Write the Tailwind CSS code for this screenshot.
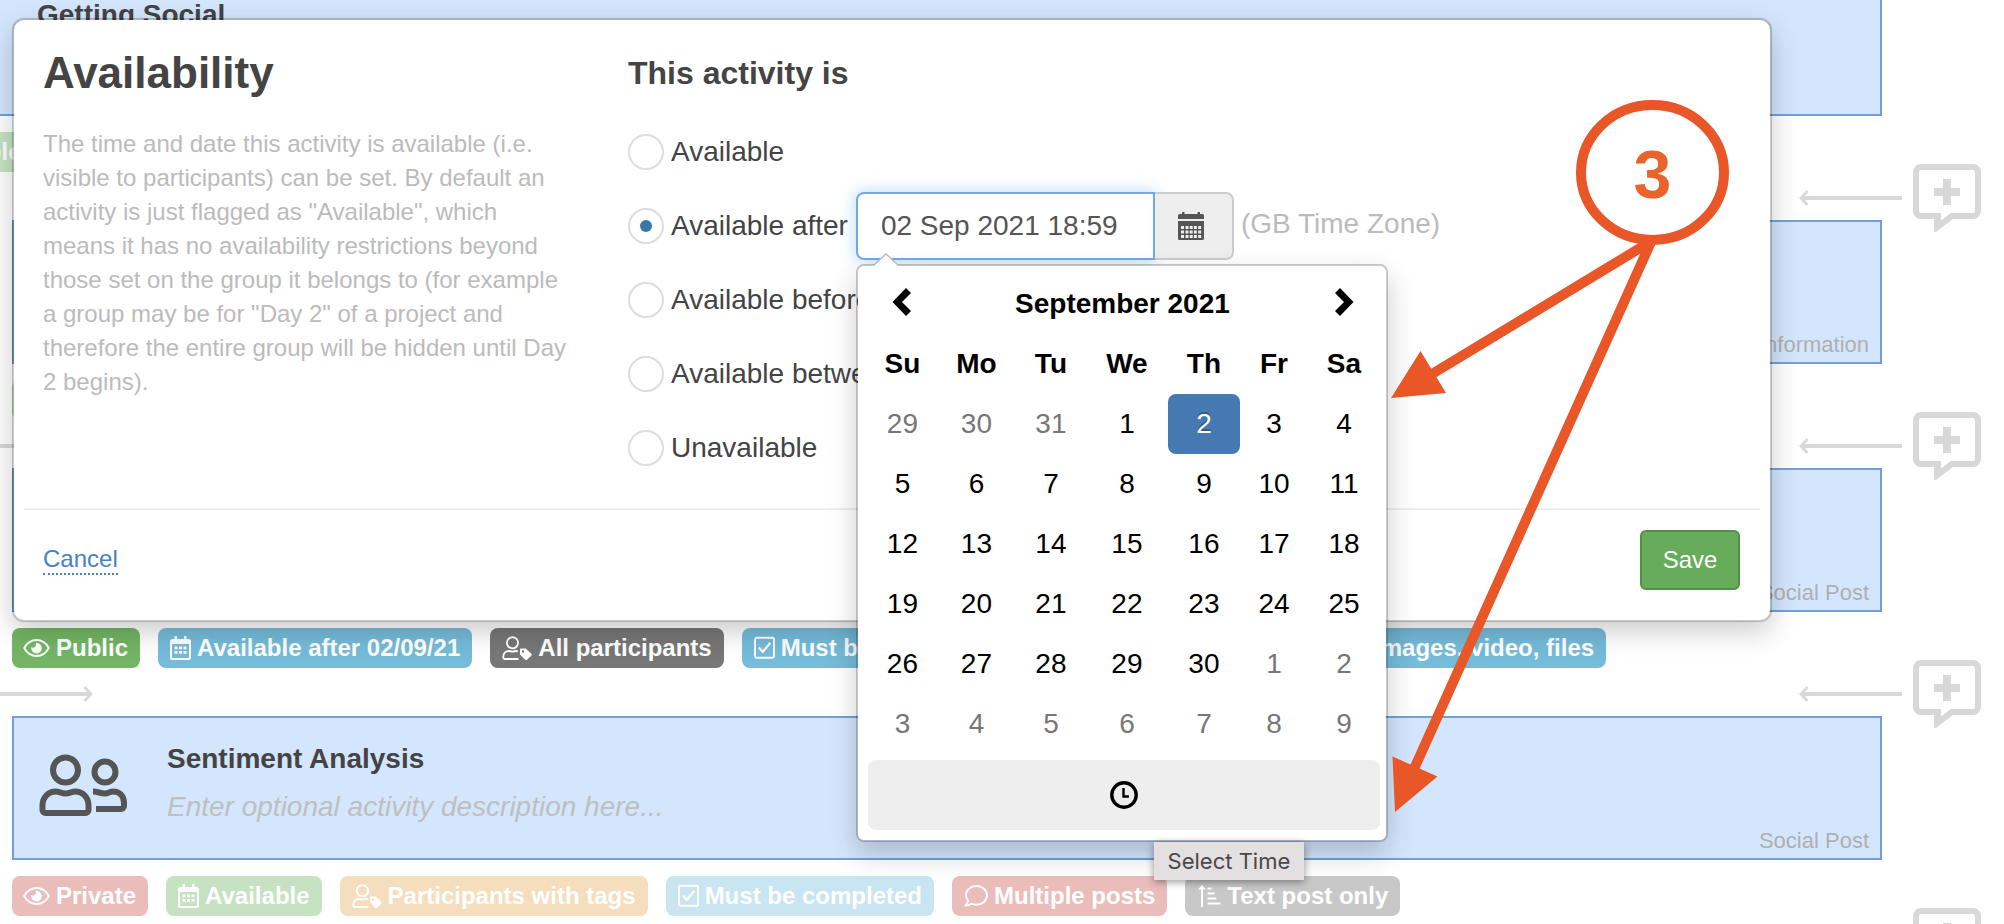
<!DOCTYPE html>
<html lang="en">
<head>
    <meta charset="UTF-8">
    <meta name="viewport" content="width=device-width, initial-scale=1.0">
    <title>Activity availability</title>

    <!-- Tailwind CSS for styling -->
    <script src="https://cdn.jsdelivr.net/npm/@tailwindcss/browser@4"></script>
</head>
<body class="relative h-screen overflow-hidden bg-white font-['Liberation_Sans',Arial,sans-serif] text-[#444]">

    <!-- Shared icons -->
    <svg class="hidden" aria-hidden="true">
        <symbol id="i-eye" viewBox="0 0 27 24">
            <path d="M1.200 12C4 6.800 8.500 4 13.500 4s9.500 2.800 12.300 8c-2.800 5.200-7.300 8-12.300 8S4 17.200 1.200 12z" fill="none" stroke="currentColor" stroke-width="1.900"/>
            <path d="M13.500 6.800a5.300 5.300 0 1 1-5.200 4.300 3 3 0 0 0 4.600-3.200 3 3 0 0 0-.3-1z" fill="currentColor"/>
        </symbol>
        <symbol id="i-calendar" viewBox="0 0 21 24">
            <path fill="currentColor" fill-rule="evenodd" d="M4.500 0h2.500v3h7V0h2.500v3h2A2.500 2.500 0 0 1 21 5.500v16A2.500 2.500 0 0 1 18.500 24h-16A2.500 2.500 0 0 1 0 21.500v-16A2.500 2.500 0 0 1 2.500 3h2zM2 8v13.500c0 .3.200.5.500.5h16c.300 0 .5-.2.5-.5V8z"/>
            <path fill="currentColor" d="M4.500 10.500h3v2.800h-3zM9 10.500h3v2.800H9zM13.500 10.500h3v2.800h-3zM4.500 15h3v2.800h-3zM9 15h3v2.800H9zM13.500 15h3v2.800h-3z"/>
        </symbol>
        <symbol id="i-user-tag" viewBox="0 0 30 24">
            <g fill="none" stroke="currentColor" stroke-width="1.900">
                <circle cx="10.500" cy="6.800" r="5.600"/>
                <path d="M16.500 23H3a1.800 1.800 0 0 1-1.800-1.800c0-3.800 2.500-6.200 5.800-6.200 1.200 0 2 .6 3.500.6s2.300-.6 3.500-.6c.8 0 1.400.1 1.900.3"/>
            </g>
            <path fill="currentColor" fill-rule="evenodd" d="M18.800 12.500h5l5.500 5.300c.6.600.6 1.300 0 1.900l-4.400 4c-.600.5-1.200.5-1.800 0l-5.100-5.100v-5.300c0-.5.3-.8.800-.8zm2.200 1.700a1.200 1.200 0 1 0 0 2.400 1.200 1.200 0 0 0 0-2.400z"/>
        </symbol>
        <symbol id="i-check" viewBox="0 0 21 24">
            <rect x="1" y="1.800" width="19" height="20" rx="1.800" fill="none" stroke="currentColor" stroke-width="1.900"/>
            <path d="M4.800 11.500l4 4.300 7.500-9" fill="none" stroke="currentColor" stroke-width="2.200"/>
        </symbol>
        <symbol id="i-comment" viewBox="0 0 24 24">
            <path d="M12.500 2C6.600 2 2 6 2 11c0 2.200.8 4.200 2.200 5.800-.5 2-1.600 3.500-3 4.700 2.200.2 4.200-.4 5.800-1.800 1.700.7 3.500 1 5.500 1C18.300 20.700 23 16.500 23 11.300S18.300 2 12.500 2z" fill="none" stroke="currentColor" stroke-width="1.900" stroke-linejoin="round"/>
        </symbol>
        <symbol id="i-sort" viewBox="0 0 24 24">
            <path d="M5 23V3" fill="none" stroke="currentColor" stroke-width="1.900"/>
            <path d="M1.200 5.500L5 .5l3.800 5z" fill="currentColor"/>
            <path d="M10.500 4.500h4M10.500 9.500h7M10.500 14.500h9M10.500 19.500h13" fill="none" stroke="currentColor" stroke-width="2"/>
        </symbol>
        <symbol id="i-users" viewBox="0 0 88 64">
            <g fill="none" stroke="currentColor" stroke-width="6">
                <circle cx="26.500" cy="16" r="12.500"/>
                <circle cx="66" cy="18" r="10.500"/>
                <path d="M17 37.500c3 0 5.500 2 9.500 2s6.500-2 9.500-2c8 0 13.500 6 13.500 14V56a3 3 0 0 1-3 3h-40a3 3 0 0 1-3-3v-4.500c0-8 5.500-14 13.500-14z"/>
                <path d="M54 37.500c5 0 7 2 12 2 3 0 5-2 8-2 7 0 11 5 11 11.500V52a3 3 0 0 1-3 3H57"/>
            </g>
        </symbol>
        <symbol id="i-arrow" viewBox="0 0 103 16">
            <path d="M103 8H3" fill="none" stroke="currentColor" stroke-width="4"/>
            <path d="M8.500 1L2 8l6.500 7" fill="none" stroke="currentColor" stroke-width="2.800"/>
        </symbol>
        <symbol id="i-add-post" viewBox="0 0 68 68">
            <path fill="currentColor" fill-rule="evenodd" d="M8 0h52a8 8 0 0 1 8 8v39a8 8 0 0 1-8 8H40L23 68a1.500 1.500 0 0 1-2-1.500V55H8a8 8 0 0 1-8-8V8a8 8 0 0 1 8-8zM8.500 6A2.500 2.500 0 0 0 6 8.500v38A2.500 2.500 0 0 0 8.500 49H28v7.500L38 49h21.500a2.500 2.500 0 0 0 2.500-2.500v-38A2.500 2.500 0 0 0 59.500 6z"/>
            <path fill="currentColor" d="M30 15h8v9h9v8h-9v9h-8v-9h-9v-8h9z"/>
        </symbol>
    </svg>

    <!-- Activity list -->
    <main class="-mt-7">

        <!-- Activity 1 -->
        <section class="-ml-[122px] mr-[122px]">
            <article class="flex h-36 border-2 border-[#739fd8] bg-[#d4e6fd] pt-[23px] pl-[157px]">
                <h3 class="text-[28px]/[36px] font-bold">Getting Social</h3>
            </article>
            <div class="mt-4 flex gap-4 text-2xl/10 font-bold text-white">
                <span class="flex items-center gap-1.5 rounded-lg bg-[#c6e2c3] px-3"><svg class="h-6 w-[21px]"><use href="#i-calendar"/></svg>Available</span>
            </div>
        </section>

        <div class="flex h-12 items-center justify-end gap-[11px] pt-1 pr-[23px] text-[#d8d8d8]">
            <svg class="h-4 w-[103px]"><use href="#i-arrow"/></svg>
            <button type="button" aria-label="Add activity"><svg class="size-[68px]"><use href="#i-add-post"/></svg></button>
        </div>

        <!-- Activity 2 -->
        <section class="ml-3 mr-[122px]">
            <article class="flex h-36 items-end justify-end border-2 border-[#739fd8] bg-[#d4e6fd] px-[11px] py-1">
                <span class="text-[22px]/[26px] text-[#b0b0b0]">Information</span>
            </article>
            <div class="mt-4 flex gap-4 text-2xl/10 font-bold text-white">
                <span class="flex items-center gap-1.5 rounded-lg bg-[#c6e2c3] px-3"><svg class="h-6 w-[27px]"><use href="#i-eye"/></svg>Public</span>
            </div>
        </section>

        <div class="flex h-12 items-center gap-[11px] pt-1 pr-[23px] text-[#d8d8d8]">
            <svg class="-ml-2.5 h-4 w-[103px] rotate-180"><use href="#i-arrow"/></svg>
            <svg class="ml-auto h-4 w-[103px]"><use href="#i-arrow"/></svg>
            <button type="button" aria-label="Add activity"><svg class="size-[68px]"><use href="#i-add-post"/></svg></button>
        </div>

        <!-- Activity 3 -->
        <section class="ml-3 mr-[122px]">
            <article class="flex h-36 items-end justify-end border-2 border-[#739fd8] bg-[#d4e6fd] px-[11px] py-1">
                <span class="text-[22px]/[26px] text-[#b0b0b0]">Social Post</span>
            </article>
            <div class="mt-4 flex gap-[18px] text-2xl/10 font-bold whitespace-nowrap text-white">
                <span class="flex items-center gap-1.5 rounded-lg bg-[#73b564] pr-3 pl-[11px]"><svg class="h-6 w-[27px]"><use href="#i-eye"/></svg>Public</span>
                <span class="flex items-center gap-1.5 rounded-lg bg-[#75bcda] px-3"><svg class="h-6 w-[21px]"><use href="#i-calendar"/></svg>Available after 02/09/21</span>
                <span class="flex items-center gap-1.5 rounded-lg bg-[#777] px-3"><svg class="h-6 w-[30px]"><use href="#i-user-tag"/></svg>All participants</span>
                <span class="flex items-center gap-1.5 rounded-lg bg-[#75bcda] px-3"><svg class="h-6 w-[21px]"><use href="#i-check"/></svg>Must be completed</span>
                <span class="flex items-center gap-1.5 rounded-lg bg-[#75bcda] px-3"><svg class="size-6"><use href="#i-comment"/></svg>Multiple posts</span>
                <span class="flex items-center gap-1.5 rounded-lg bg-[#75bcda] px-3"><svg class="size-6"><use href="#i-sort"/></svg>Allow images, video, files</span>
            </div>
        </section>

        <div class="flex h-12 items-center gap-[11px] pt-1 pr-[23px] text-[#d8d8d8]">
            <svg class="-ml-2.5 h-4 w-[103px] rotate-180"><use href="#i-arrow"/></svg>
            <svg class="ml-auto h-4 w-[103px]"><use href="#i-arrow"/></svg>
            <button type="button" aria-label="Add activity"><svg class="size-[68px]"><use href="#i-add-post"/></svg></button>
        </div>

        <!-- Activity 4 -->
        <section class="ml-3 mr-[122px]">
            <article class="flex h-36 border-2 border-[#739fd8] bg-[#d4e6fd] pr-[11px] pl-[25px]">
                <svg class="mt-9 h-16 w-[88px] text-[#555]"><use href="#i-users"/></svg>
                <div class="ml-10 flex-1 pt-[23px]">
                    <h3 class="text-[28px]/[36px] font-bold">Sentiment Analysis</h3>
                    <p class="mt-3 text-[28px]/[36px] text-[#bfbfbf] italic">Enter optional activity description here...</p>
                </div>
                <span class="self-end pb-1 text-[22px]/[26px] text-[#b0b0b0]">Social Post</span>
            </article>
            <div class="mt-4 flex gap-[18px] text-2xl/10 font-bold whitespace-nowrap text-white">
                <span class="flex items-center gap-1.5 rounded-lg bg-[#eabdbb] pr-3 pl-[11px]"><svg class="h-6 w-[27px]"><use href="#i-eye"/></svg>Private</span>
                <span class="flex items-center gap-1.5 rounded-lg bg-[#c6e2c3] px-3"><svg class="h-6 w-[21px]"><use href="#i-calendar"/></svg>Available</span>
                <span class="flex items-center gap-1.5 rounded-lg bg-[#f5debd] px-3"><svg class="h-6 w-[30px]"><use href="#i-user-tag"/></svg>Participants with tags</span>
                <span class="flex items-center gap-1.5 rounded-lg bg-[#c9e5f1] px-3"><svg class="h-6 w-[21px]"><use href="#i-check"/></svg>Must be completed</span>
                <span class="flex items-center gap-1.5 rounded-lg bg-[#eabdbb] px-3"><svg class="size-6"><use href="#i-comment"/></svg>Multiple posts</span>
                <span class="flex items-center gap-1.5 rounded-lg bg-[#c8c8c8] px-3"><svg class="size-6"><use href="#i-sort"/></svg>Text post only</span>
            </div>
        </section>

        <div class="flex h-12 items-center justify-end pt-1 pr-[23px] text-[#d8d8d8]">
            <button type="button" aria-label="Add activity"><svg class="size-[68px]"><use href="#i-add-post"/></svg></button>
        </div>
    </main>

    <!-- Availability popover -->
    <form role="dialog" aria-labelledby="dialog-title" class="absolute top-[18px] right-[232px] left-3 rounded-xl border-2 border-black/20 bg-white bg-clip-padding shadow-[0_10px_28px_rgba(0,0,0,0.2)]">
        <div class="flex px-[29px] pt-[29px] pb-[23px]">
            <div class="w-[585px] pr-14">
                <h1 id="dialog-title" class="text-[44px]/[48px] font-bold">Availability</h1>
                <p class="mt-[30px] text-2xl/[34px] text-[#bbb]">The time and date this activity is available (i.e. visible to participants) can be set. By default an activity is just flagged as "Available", which means it has no availability restrictions beyond those set on the group it belongs to (for example a group may be for "Day 2" of a project and therefore the entire group will be hidden until Day 2 begins).</p>
            </div>

            <div class="flex-1 text-[28px]">
                <h2 class="mb-[18px] text-[32px]/[48px] font-bold">This activity is</h2>
                <div class="flex h-[74px] items-center gap-[7px]">
                    <input type="radio" name="availability" id="opt-available" class="size-9 appearance-none rounded-full border-2 border-[#ddd] bg-clip-content p-2.5 checked:bg-[#3a76a8]">
                    <label for="opt-available">Available</label>
                </div>
                <div class="flex h-[74px] items-center gap-[7px]">
                    <input type="radio" name="availability" id="opt-after" checked class="size-9 appearance-none rounded-full border-2 border-[#ddd] bg-clip-content p-2.5 checked:bg-[#3a76a8]">
                    <label for="opt-after" class="pr-px">Available after</label>
                    <div class="relative flex h-[68px]">
                        <input type="text" aria-label="Available after date" value="02 Sep 2021 18:59" class="w-[299px] rounded-l-lg border-2 border-[#70a9e6] px-[23px] text-[#555] shadow-[0_0_16px_rgba(102,175,233,0.5)] outline-none">
                        <button type="button" aria-label="Open calendar" class="flex w-[79px] items-center justify-center rounded-r-lg border-2 border-l-0 border-[#ccc] bg-[#eee] pr-1 text-[#555]">
                            <svg class="h-7 w-[26px]" viewBox="0 0 26 28" fill="currentColor">
                                <path d="M4 0h2.500v2h13V0H22v2h2.500A1.500 1.500 0 0 1 26 3.500V7H0V3.500A1.500 1.500 0 0 1 1.500 2H4z"/>
                                <path fill-rule="evenodd" d="M0 9h26v17.500a1.500 1.500 0 0 1-1.500 1.500h-23A1.500 1.500 0 0 1 0 26.500zM3 14v3h3v-3zm4.500 0v3h3v-3zm4.200 0v3h3v-3zm4.200 0v3h3v-3zm4.300 0v3h3v-3zM3 18.500v3h3v-3zm4.500 0v3h3v-3zm4.200 0v3h3v-3zm4.200 0v3h3v-3zm4.300 0v3h3v-3zM3 23v3h3v-3zm4.500 0v3h3v-3zm4.200 0v3h3v-3zm4.200 0v3h3v-3zm4.300 0v3h3v-3z"/>
                            </svg>
                        </button>

                        <!-- Date picker -->
                        <div class="absolute top-[72px] left-0 z-10 w-[532px] rounded-lg border-2 border-black/20 bg-white bg-clip-padding pt-2 pr-1.5 pb-2.5 pl-2.5 text-black shadow-[0_12px_28px_rgba(0,0,0,0.2)]">
                            <svg class="absolute -top-[13px] left-[15px] h-[13px] w-[26px]" viewBox="0 0 26 13">
                                <path d="M0 13L13 1l13 12z" fill="#fff"/>
                                <path d="M0 13L13 1l13 12" fill="none" stroke="#bbb" stroke-width="1.500"/>
                            </svg>
                            <table class="w-full table-fixed text-center [&_td]:h-[60px] [&_th]:h-[60px] [&_td]:p-0 [&_th]:p-0">
                                <colgroup>
                                    <col class="w-[69px]"><col class="w-[79px]"><col class="w-[70px]"><col class="w-[82px]"><col class="w-[72px]"><col class="w-[68px]"><col>
                                </colgroup>
                                <thead>
                                    <tr>
                                        <th><button type="button" aria-label="Previous month" class="block w-full pb-1"><svg class="mx-auto h-7 w-5" viewBox="0 0 20 28"><path d="M14 0l5 5-9 9 9 9-5 5L.5 14z"/></svg></button></th>
                                        <th colspan="5">September 2021</th>
                                        <th><button type="button" aria-label="Next month" class="block w-full pb-1"><svg class="mx-auto h-7 w-5" viewBox="0 0 20 28"><path d="M6 0L1 5l9 9-9 9 5 5 13.500-14z"/></svg></button></th>
                                    </tr>
                                    <tr><th>Su</th><th>Mo</th><th>Tu</th><th>We</th><th>Th</th><th>Fr</th><th>Sa</th></tr>
                                </thead>
                                <tbody>
                                    <tr><td class="text-[#777]">29</td><td class="text-[#777]">30</td><td class="text-[#777]">31</td><td>1</td><td class="rounded-lg bg-[#4679b2] text-white text-shadow-[0_-2px_0_rgba(0,0,0,0.25)]">2</td><td>3</td><td>4</td></tr>
                                    <tr><td>5</td><td>6</td><td>7</td><td>8</td><td>9</td><td>10</td><td>11</td></tr>
                                    <tr><td>12</td><td>13</td><td>14</td><td>15</td><td>16</td><td>17</td><td>18</td></tr>
                                    <tr><td>19</td><td>20</td><td>21</td><td>22</td><td>23</td><td>24</td><td>25</td></tr>
                                    <tr><td>26</td><td>27</td><td>28</td><td>29</td><td>30</td><td class="text-[#777]">1</td><td class="text-[#777]">2</td></tr>
                                    <tr class="text-[#777]"><td>3</td><td>4</td><td>5</td><td>6</td><td>7</td><td>8</td><td>9</td></tr>
                                </tbody>
                            </table>
                            <button type="button" aria-label="Select Time" class="mt-1.5 flex h-[70px] w-full items-center justify-center rounded-lg bg-[#eee]">
                                <svg class="size-7" viewBox="0 0 28 28" fill="none" stroke="#000">
                                    <circle cx="14" cy="14" r="12.200" stroke-width="3.400"/>
                                    <path d="M13.500 7v8.500H19" stroke-width="2.400"/>
                                </svg>
                            </button>
                            <!-- Tooltip of the time button -->
                            <div role="tooltip" class="absolute top-full left-[296px] mt-0.5 flex h-[38px] w-[150px] items-center justify-center bg-[#e4dfe0] font-['Inter',sans-serif] text-[22px] text-[#4a4748] shadow-[0_2px_8px_rgba(0,0,0,0.4)]">Select Time</div>
                        </div>
                    </div>
                    <span class="pb-1 text-[#bbb]">(GB Time Zone)</span>
                </div>
                <div class="flex h-[74px] items-center gap-[7px]">
                    <input type="radio" name="availability" id="opt-before" class="size-9 appearance-none rounded-full border-2 border-[#ddd] bg-clip-content p-2.5 checked:bg-[#3a76a8]">
                    <label for="opt-before">Available before</label>
                </div>
                <div class="flex h-[74px] items-center gap-[7px]">
                    <input type="radio" name="availability" id="opt-between" class="size-9 appearance-none rounded-full border-2 border-[#ddd] bg-clip-content p-2.5 checked:bg-[#3a76a8]">
                    <label for="opt-between">Available between</label>
                </div>
                <div class="flex h-[74px] items-center gap-[7px]">
                    <input type="radio" name="availability" id="opt-unavailable" class="size-9 appearance-none rounded-full border-2 border-[#ddd] bg-clip-content p-2.5 checked:bg-[#3a76a8]">
                    <label for="opt-unavailable">Unavailable</label>
                </div>
            </div>
        </div>

        <div class="mx-2.5 flex items-center justify-between border-t-2 border-[#eee] pt-5 pr-5 pb-[30px] pl-[19px] text-2xl">
            <a href="#" class="border-b-2 border-dotted border-[#4a80c4] leading-7 text-[#4a80c4]">Cancel</a>
            <button type="button" class="h-[60px] w-[100px] rounded-md border-2 border-[#508f45] bg-[#67ac5b] text-white">Save</button>
        </div>
    </form>

    <!-- Step marker and its arrows -->
    <svg class="pointer-events-none absolute top-0 right-0 z-20 h-[924px] w-[664px]" viewBox="1340 0 664 924">
        <g fill="none" stroke="#e95628" stroke-width="10">
            <ellipse cx="1652.500" cy="172.500" rx="71.500" ry="67.500"/>
            <path d="M1650 242L1432 374M1651 242L1414 769"/>
        </g>
        <path fill="#e95628" d="M1391 398l29.500-47 25.500 42zM1395 812l-2.500-55.500 45 20z"/>
        <text x="1652.500" y="198" text-anchor="middle" fill="#e8642b" class="text-[68px] font-bold">3</text>
    </svg>

</body>
</html>
